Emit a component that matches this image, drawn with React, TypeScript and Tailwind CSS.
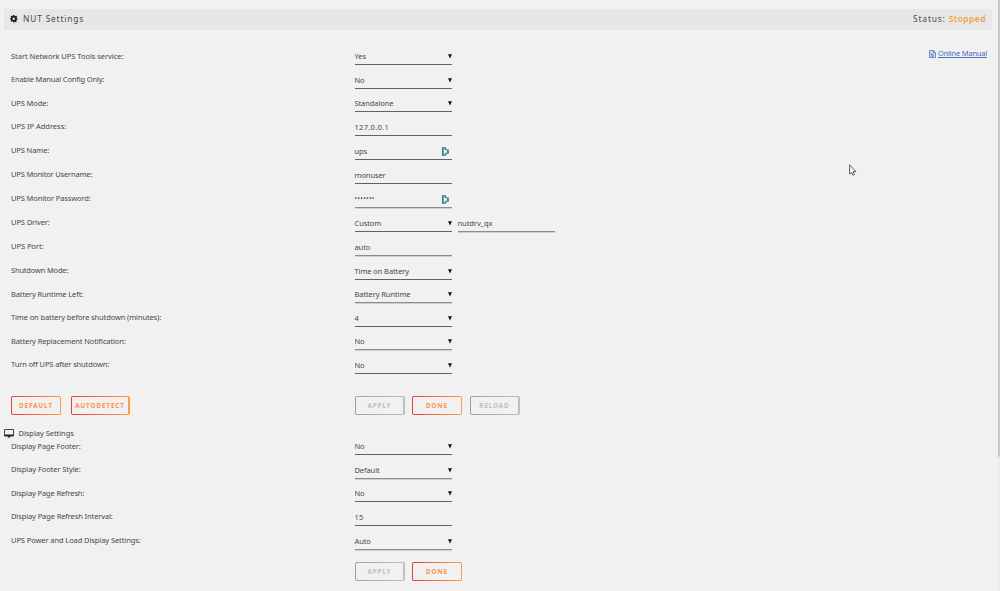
import type { ReactNode } from "react";

type Row = {
  label: string;
  value: string;
  h: string;
  kind?: "select" | "text" | "keyed" | "secret";
  extra?: string;
  soft?: boolean;
  tracking: string;
};

const nutRows: Row[] = [
  { label: "Start Network UPS Tools service:", value: "Yes", h: "h-[23px]", tracking: "tracking-[-0.04px]" },
  { label: "Enable Manual Config Only:", value: "No", h: "h-6", tracking: "tracking-[-0.16px]" },
  { label: "UPS Mode:", value: "Standalone", h: "h-[23px]", tracking: "tracking-[-0.12px]" },
  { label: "UPS IP Address:", value: "127.0.0.1", h: "h-6", kind: "text", tracking: "tracking-[-0.02px]" },
  { label: "UPS Name:", value: "ups", h: "h-6", kind: "keyed", tracking: "tracking-[-0.12px]" },
  { label: "UPS Monitor Username:", value: "monuser", h: "h-6", kind: "text", tracking: "tracking-[-0.17px]" },
  { label: "UPS Monitor Password:", value: "•••••••", h: "h-6", kind: "secret", soft: true, tracking: "tracking-[-0.12px]" },
  { label: "UPS Driver:", value: "Custom", h: "h-6", extra: "nutdrv_qx", tracking: "tracking-[-0.09px]" },
  { label: "UPS Port:", value: "auto", h: "h-6", kind: "text", soft: true, tracking: "tracking-[-0.05px]" },
  { label: "Shutdown Mode:", value: "Time on Battery", h: "h-6", tracking: "tracking-[-0.18px]" },
  { label: "Battery Runtime Left:", value: "Battery Runtime", h: "h-[23px]", soft: true, tracking: "tracking-[-0.13px]" },
  { label: "Time on battery before shutdown (minutes):", value: "4", h: "h-6", tracking: "tracking-[-0.12px]" },
  { label: "Battery Replacement Notification:", value: "No", h: "h-[23px]", soft: true, tracking: "tracking-[-0.12px]" },
  { label: "Turn off UPS after shutdown:", value: "No", h: "h-6", tracking: "tracking-[-0.13px]" },
];

const displayRows: Row[] = [
  { label: "Display Page Footer:", value: "No", h: "h-4", tracking: "tracking-[-0.12px]" },
  { label: "Display Footer Style:", value: "Default", h: "h-6", soft: true, tracking: "tracking-[-0.08px]" },
  { label: "Display Page Refresh:", value: "No", h: "h-[23px]", tracking: "tracking-[-0.13px]" },
  { label: "Display Page Refresh Interval:", value: "15", h: "h-6", kind: "text", tracking: "tracking-[-0.11px]" },
  { label: "UPS Power and Load Display Settings:", value: "Auto", h: "h-6", soft: true, tracking: "tracking-[-0.09px]" },
];

function KeyIcon() {
  return (
    <svg className="mt-px mr-[3px] h-[9px] w-[7px] shrink-0" viewBox="0 0 7 9" fill="#2f7888">
      <path d="M0 0h1.600v9H0zM2.300 0h1.500v2.500H2.300zM2.300 6.500h1.500V9H2.300zM3.600 1.700h1.400V3.200H3.600zM3.600 5.800h1.400v1.500H3.600zM5.100 2.500h1.700v4.200H5.100z" />
    </svg>
  );
}

function SettingRow({ row }: { row: Row }) {
  const kind = row.kind ?? "select";
  const line = row.soft
    ? "border-b border-[#8c8c8c] shadow-[0_1px_0_#cfcfcf]"
    : "border-b border-[#626262]";
  const valueStyle =
    kind === "secret"
      ? "text-[6.6px] leading-[10px] tracking-[0.4px]"
      : /^\d/.test(row.value)
        ? "leading-[10px] tracking-[0.3px]"
        : "leading-[10px] tracking-[-0.1px]";
  const labelOffset = row.h === "h-6" ? "pb-[5px] " : "pb-1 ";
  return (
    <div className={"flex items-end " + row.h}>
      <div className={"w-[343.5px] shrink-0 leading-[10px] whitespace-nowrap " + labelOffset + row.tracking}>
        {row.label}
      </div>
      <div className={"flex h-[14px] w-[97.5px] shrink-0 items-start justify-between " + line}>
        <span className={valueStyle}>{row.value}</span>
        {kind === "select" && (
          <svg className="mt-[3px] h-[5px] w-1" viewBox="0 0 4 5" fill="#111">
            <path d="M0 .3h4L2 4.500z" />
          </svg>
        )}
        {(kind === "keyed" || kind === "secret") && <KeyIcon />}
      </div>
      {row.extra && (
        <div className="ml-[5.5px] h-[14px] w-[97px] border-b border-[#8c8c8c] leading-[10px] tracking-[-0.06px] shadow-[0_1px_0_#cfcfcf]">
          {row.extra}
        </div>
      )}
    </div>
  );
}

function Button({ children, disabled, w }: { children: ReactNode; disabled?: boolean; w: string }) {
  return (
    <div
      className={
        "h-[19px] shrink-0 rounded-[2px] p-[1.3px] " +
        w +
        (disabled
          ? " bg-linear-to-r from-[#a0a0a0] to-[#c0c0c0]"
          : " bg-linear-to-r from-[#e8393b] to-[#ff9c45]")
      }
    >
      <button
        className={
          "flex h-full w-full items-center justify-center rounded-[1px] bg-[#f1f1f1] text-[6.3px] font-bold tracking-[0.9px] " +
          (disabled ? "text-[#bdbdbd]" : "text-[#ff9340]")
        }
      >
        {children}
      </button>
    </div>
  );
}

export default function App() {
  return (
    <div className="relative flex h-[591px] w-[1000px] overflow-hidden bg-[#f1f1f1] font-['Noto_Sans',sans-serif] text-[7.5px] text-[#484848]">
      <div className="w-[992px] shrink-0 pt-[9px] pl-1">
        <header className="flex h-[21px] items-center bg-[#e7e7e7] pr-[6px] pl-[6px] text-[8.4px] tracking-[0.83px]">
          <svg className="mb-[1.5px] h-[7.5px] w-[7.5px]" viewBox="0 0 16 16" fill="#1c1c1c">
            <path
              fillRule="evenodd"
              d="M6.5 0h3l.5 2.2 1.4.6L13.300 1.600l2.100 2.100L14 5.600l.6 1.400L16 7.500v2l-2 .6-.6 1.300 1.200 1.900-2.200 2.100-1.800-1.200-1.200.5L9 16H7l-.5-2-1.300-.6-1.900 1.100-2.100-2.100L2.400 10.500 1.900 9.300 0 9V6.800l2-.5.6-1.300L1.400 3.200l2.100-2.100 1.900 1.100.8-.3zM8 5.500a2.500 2.500 0 1 0 0 5 2.500 2.500 0 0 0 0-5z"
            />
          </svg>
          <span className="ml-[5.5px]">NUT Settings</span>
          <span className="ml-auto">
            Status: <span className="font-semibold tracking-[0.5px] text-[#eda440]">Stopped</span>
          </span>
        </header>

        <section className="flex pt-3 pl-[7px]">
          <div className="w-[560px]">
            {nutRows.map((r) => (
              <SettingRow key={r.label} row={r} />
            ))}
          </div>
          <a className="mt-[7px] mr-[5px] ml-auto flex h-[10px] items-center gap-[2px] tracking-[-0.2px] text-[#486dba]">
            <svg className="h-2 w-[7px]" viewBox="0 0 7 8" fill="#d5def0" stroke="#5f80c4" strokeWidth=".9">
              <path d="M.5.500h4l2 2v5h-6zM4.300.500v2.200h2.200M2 3.500h1M2 4.700h3M2 6h3" />
            </svg>
            <span className="whitespace-nowrap underline">Online Manual</span>
          </a>
        </section>

        <div className="mt-[22px] flex pl-[7px]">
          <div className="flex w-[343.5px] shrink-0 gap-[9.5px]">
            <Button w="w-[50px]">DEFAULT</Button>
            <Button w="w-[59px]">AUTODETECT</Button>
          </div>
          <div className="flex gap-[7.5px]">
            <Button w="w-[50px]" disabled>APPLY</Button>
            <Button w="w-[50px]">DONE</Button>
            <Button w="w-[50px]" disabled>RELOAD</Button>
          </div>
        </div>

        <div className="mt-[13px] flex h-[11px] items-center">
          <svg className="h-[9px] w-[10px]" viewBox="0 0 10 9">
            <path d="M.5.500h9v6.200h-9z" fill="none" stroke="#333" strokeWidth=".9" />
            <path d="M.2 5.600h9.600v1.600H6.200l.3 1.300h-3l.3-1.300H.2z" fill="#222" />
          </svg>
          <span className="ml-[4.5px] tracking-[-0.05px]">Display Settings</span>
        </div>
        <section className="pl-[7px]">
          {displayRows.map((r) => (
            <SettingRow key={r.label} row={r} />
          ))}
        </section>
        <div className="mt-3 flex gap-[7.5px] pl-[350.5px]">
          <Button w="w-[50px]" disabled>APPLY</Button>
          <Button w="w-[50px]">DONE</Button>
        </div>
      </div>
      <div className="ml-auto h-full w-[2px] bg-[#ebebeb]">
        <div className="h-[457px] w-full rounded-b-[1px] bg-[#c8c8c8]" />
      </div>
      <svg className="absolute top-[164px] left-[849px] h-3 w-2" viewBox="0 0 8 12" fill="#fff" stroke="#333" strokeWidth=".8">
        <path d="M.6.800v9.300l2-1.900 1.300 3 1.500-.7-1.300-2.900h2.800z" />
      </svg>
    </div>
  );
}
